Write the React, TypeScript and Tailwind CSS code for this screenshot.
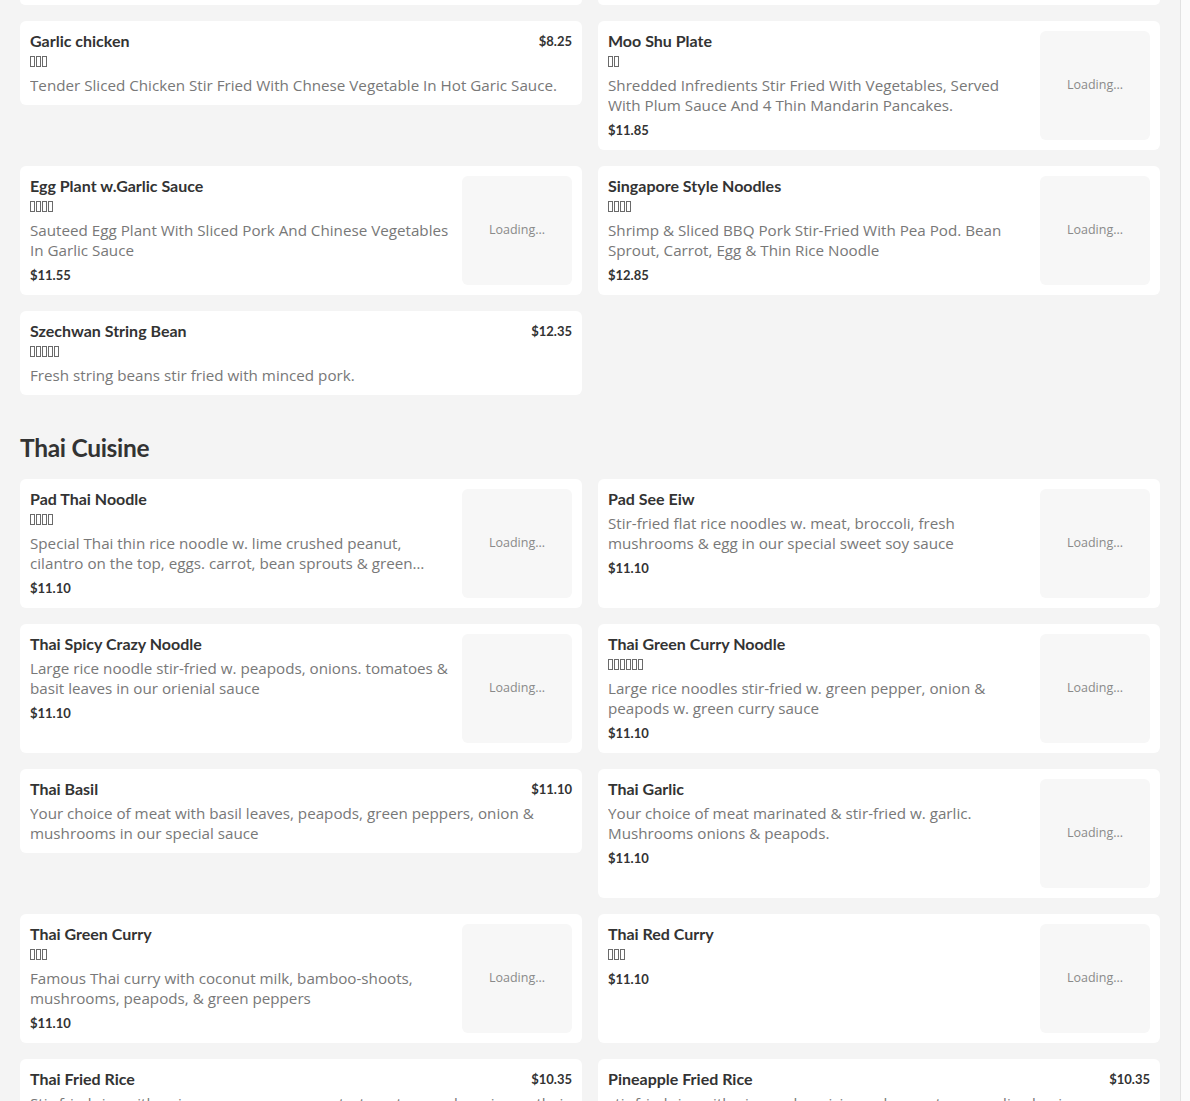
import React from "react";

type Item = {
  name: string;
  zh?: number;
  desc?: string;
  price: string;
  img?: boolean;
};

const chinese: Item[][] = [
  [
    {
      name: "Garlic chicken",
      zh: 3,
      desc: "Tender Sliced Chicken Stir Fried With Chnese Vegetable In Hot Garic Sauce.",
      price: "$8.25",
    },
    {
      name: "Moo Shu Plate",
      zh: 2,
      desc: "Shredded Infredients Stir Fried With Vegetables, Served With Plum Sauce And 4 Thin Mandarin Pancakes.",
      price: "$11.85",
      img: true,
    },
  ],
  [
    {
      name: "Egg Plant w.Garlic Sauce",
      zh: 4,
      desc: "Sauteed Egg Plant With Sliced Pork And Chinese Vegetables In Garlic Sauce",
      price: "$11.55",
      img: true,
    },
    {
      name: "Singapore Style Noodles",
      zh: 4,
      desc: "Shrimp & Sliced BBQ Pork Stir-Fried With Pea Pod. Bean Sprout, Carrot, Egg & Thin Rice Noodle",
      price: "$12.85",
      img: true,
    },
  ],
  [
    {
      name: "Szechwan String Bean",
      zh: 5,
      desc: "Fresh string beans stir fried with minced pork.",
      price: "$12.35",
    },
  ],
];

const thai: Item[][] = [
  [
    {
      name: "Pad Thai Noodle",
      zh: 4,
      desc: "Special Thai thin rice noodle w. lime crushed peanut, cilantro on the top, eggs. carrot, bean sprouts & green onion in our special sauce",
      price: "$11.10",
      img: true,
    },
    {
      name: "Pad See Eiw",
      desc: "Stir-fried flat rice noodles w. meat, broccoli, fresh mushrooms & egg in our special sweet soy sauce",
      price: "$11.10",
      img: true,
    },
  ],
  [
    {
      name: "Thai Spicy Crazy Noodle",
      desc: "Large rice noodle stir-fried w. peapods, onions. tomatoes & basit leaves in our orienial sauce",
      price: "$11.10",
      img: true,
    },
    {
      name: "Thai Green Curry Noodle",
      zh: 6,
      desc: "Large rice noodles stir-fried w. green pepper, onion & peapods w. green curry sauce",
      price: "$11.10",
      img: true,
    },
  ],
  [
    {
      name: "Thai Basil",
      desc: "Your choice of meat with basil leaves, peapods, green peppers, onion & mushrooms in our special sauce",
      price: "$11.10",
    },
    {
      name: "Thai Garlic",
      desc: "Your choice of meat marinated & stir-fried w. garlic. Mushrooms onions & peapods.",
      price: "$11.10",
      img: true,
    },
  ],
  [
    {
      name: "Thai Green Curry",
      zh: 3,
      desc: "Famous Thai curry with coconut milk, bamboo-shoots, mushrooms, peapods, & green peppers",
      price: "$11.10",
      img: true,
    },
    {
      name: "Thai Red Curry",
      zh: 3,
      price: "$11.10",
      img: true,
    },
  ],
  [
    {
      name: "Thai Fried Rice",
      desc: "Stir-fried rice with onions, green peas, carrots, tomatoes and egg in our thai special sauce",
      price: "$10.35",
    },
    {
      name: "Pineapple Fried Rice",
      desc: "stir fried rice with pineapple, raisin, cashew nuts, peas, diced onion, curry powder in our thai special sauce",
      price: "$10.35",
    },
  ],
];

function Tofu({ n }: { n: number }) {
  return (
    <div className="flex h-5 items-center gap-[1px]">
      {Array.from({ length: n }).map((_, i) => (
        <span key={i} className="inline-block h-[11px] w-[5px] border border-[#6a6a6a]" />
      ))}
    </div>
  );
}

function Card({ item }: { item: Item }) {
  return (
    <div className="flex gap-[10px] rounded-md bg-white p-[10px]">
      <div className="min-w-0 flex-1">
        <div className="flex items-start justify-between gap-3">
          <h3 className="text-[16px] font-bold leading-5 text-[#333333]">{item.name}</h3>
          {!item.img && (
            <span className="text-[13px] font-bold leading-5 text-[#333333]">{item.price}</span>
          )}
        </div>
        {item.zh ? <Tofu n={item.zh} /> : null}
        {item.desc && (
          <p className="mt-1 line-clamp-2 font-['Open_Sans',sans-serif] text-[15.2px] leading-5 text-[#787878]">
            {item.desc}
          </p>
        )}
        {item.img && (
          <div className="mt-[5px] text-[13px] font-bold leading-5 text-[#333333]">{item.price}</div>
        )}
      </div>
      {item.img && (
        <div className="flex h-[109px] w-[110px] shrink-0 items-center justify-center rounded-md bg-[#f7f7f7] font-['Open_Sans',sans-serif] text-[12.5px] text-[#8a8a8a]">
          Loading...
        </div>
      )}
    </div>
  );
}

function Rows({ rows }: { rows: Item[][] }) {
  return (
    <div className="flex flex-col gap-4">
      {rows.map((row, i) => (
        <div key={i} className="grid grid-cols-2 items-start gap-4">
          {row.map((item) => (
            <Card key={item.name} item={item} />
          ))}
        </div>
      ))}
    </div>
  );
}

export default function App() {
  return (
    <div className="flex min-h-screen bg-[#f4f4f4] font-['Lato',sans-serif]">
      <main className="flex-1 px-5 pb-10">
        <div className="mb-4 grid grid-cols-2 gap-4">
          <div className="h-[5px] rounded-b-md bg-white" />
          <div className="h-[5px] rounded-b-md bg-white" />
        </div>
        <Rows rows={chinese} />
        <h2 className="mb-[15px] mt-[37px] text-[24.5px] font-bold leading-8 tracking-[-0.3px] text-[#333333]">
          Thai Cuisine
        </h2>
        <Rows rows={thai} />
      </main>
      <div className="w-[10px] shrink-0 border-l border-[#e2e2e2] bg-[#fbfbfb]" />
    </div>
  );
}
